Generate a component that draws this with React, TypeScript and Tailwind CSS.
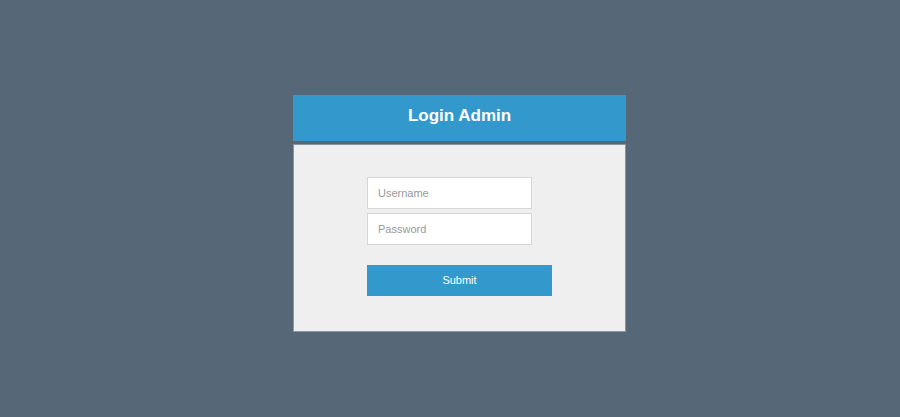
export default function App() {
  return (
    <div className="min-h-[417px] w-full bg-[#566777] pt-[95px] pl-[293px] font-['Liberation_Sans',Arial,sans-serif]">
      <div className="w-[333px]">
        <div className="flex h-[46px] justify-center bg-[#3399cc] pt-[11px]">
          <h1 className="text-[17px] font-bold leading-[20px] text-white">Login Admin</h1>
        </div>
        <div className="mt-[3px] h-[188px] border border-[#8796a3] bg-[#efefef] pl-[73px] pt-[32px]">
          <input
            type="text"
            placeholder="Username"
            className="box-border block h-[32px] w-[165px] border border-[#d6d6d6] bg-white px-[10px] text-[11px] text-[#555] placeholder:text-[#999] outline-none"
          />
          <input
            type="password"
            placeholder="Password"
            className="mt-[4px] box-border block h-[32px] w-[165px] border border-[#d6d6d6] bg-white px-[10px] text-[11px] text-[#555] placeholder:text-[#999] outline-none"
          />
          <button className="mt-[20px] block h-[31px] w-[185px] bg-[#3399cc] text-[11px] text-white">
            Submit
          </button>
        </div>
      </div>
    </div>
  );
}
